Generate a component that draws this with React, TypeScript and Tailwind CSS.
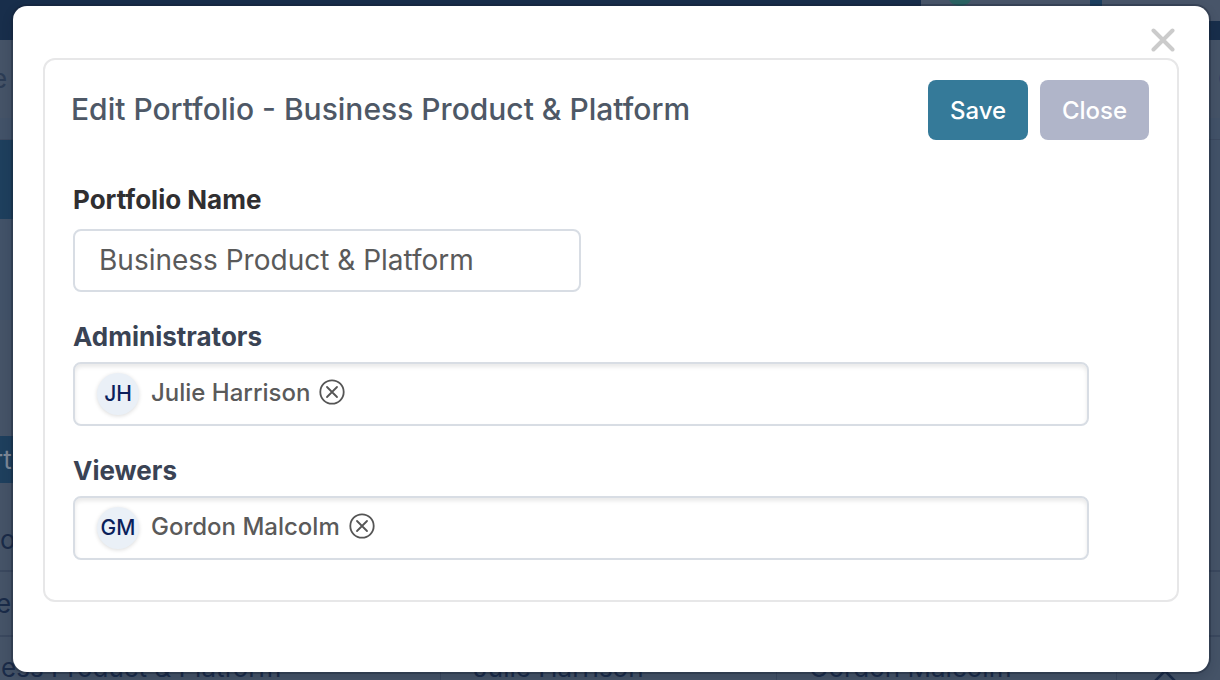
import { useState } from 'react';
import { ChevronUp } from 'lucide-react';

type Person = { initials: string; name: string };

function CloseIcon() {
  return (
    <svg viewBox="0 0 24 24" className="size-6" fill="none" stroke="#cbcbcb" strokeWidth="4" strokeLinecap="round">
      <path d="M2.5 2.5l19 19M21.5 2.5l-19 19" />
    </svg>
  );
}

function RemoveIcon() {
  return (
    <svg viewBox="0 0 26 26" className="size-[26px]" fill="none" stroke="#555" strokeWidth="1.8" strokeLinecap="round">
      <circle cx="13" cy="13" r="11.7" />
      <path d="M8 8l10 10M18 8L8 18" />
    </svg>
  );
}

function PeopleField({ label, initial }: { label: string; initial: Person[] }) {
  const [people, setPeople] = useState(initial);

  return (
    <div role="group" aria-label={label} className="mt-[29px] mr-[60px]">
      <h3 className="text-[26px] leading-8 font-bold text-[#3a4354]">{label}</h3>
      <div className="mt-[9px] flex h-16 items-center gap-4 rounded-lg border-2 border-[#d8dde4] px-[22px] pb-1 shadow-[inset_0_3px_4px_rgba(0,0,0,0.09)]">
        {people.map((person) => (
          <div key={person.name} className="flex items-center">
            <span className="mt-[3px] flex size-[42px] items-center justify-center rounded-full bg-[#eaf0f7] text-[21px] font-medium text-[#0b1f5c] shadow-[0_1px_4px_rgba(0,0,0,0.14)]">
              {person.initials}
            </span>
            <span className="ml-3 pt-0.5 text-2xl font-medium text-[#5a5a5a]">{person.name}</span>
            <button
              type="button"
              aria-label={`Remove ${person.name}`}
              className="ml-[9px]"
              onClick={() => setPeople(people.filter((p) => p !== person))}
            >
              <RemoveIcon />
            </button>
          </div>
        ))}
      </div>
    </div>
  );
}

function PageBehind() {
  return (
    <div aria-hidden="true" className="flex h-full flex-col bg-[#455367] text-[26px] leading-8 text-[#1a2b48]">
      <div className="flex h-10 shrink-0 bg-[#182e4b]">
        <div className="flex-1" />
        <div className="w-[299px]">
          <div className="flex h-[21px] overflow-hidden bg-[#1c3f60]">
            <div className="w-[169px] bg-[#485569] pl-[26px]">
              <div className="-mt-5 size-[26px] rounded-full bg-[#2b6263]" />
            </div>
            <div className="ml-3 flex-1 bg-[#485569]" />
          </div>
        </div>
      </div>
      <div className="flex h-[78px] shrink-0 items-center justify-between text-[#2c3c54]">
        <span className="-ml-2">e</span>
        <span className="-mr-[18px] text-[#1c3964]">O</span>
      </div>
      <div className="h-[22px] shrink-0 border-b border-[#3c4a60] bg-[#425268]" />
      <div className="flex h-[79px] shrink-0 bg-[#425268]">
        <div className="w-1/2 bg-[#1e3f5d]" />
      </div>
      <div className="h-[101px] shrink-0 bg-[#425268]" />
      <div className="h-[116px] shrink-0" />
      <div className="flex h-[47px] shrink-0">
        <div className="flex w-1/2 items-center bg-[#1e3f5d] text-[#7c8796]">
          <span className="-ml-[7px]">rt</span>
        </div>
      </div>
      <div className="flex h-[89px] shrink-0 items-end border-b-2 border-[#3a485e] pb-[14px]">o</div>
      <div className="flex h-[65px] shrink-0 items-center border-b-2 border-[#3a485e]">
        <span className="-ml-1">er</span>
      </div>
      <div className="flex h-[62px] shrink-0 items-center">
        <div className="flex h-full w-[441px] items-center border-r border-[#3a485e] pl-px">ess Product & Platform</div>
        <div className="flex h-full w-[336px] items-center border-r border-[#3a485e] pl-8">Julie Harrison</div>
        <div className="flex h-full w-[340px] items-center border-r border-[#3a485e] pl-8">Gordon Malcolm</div>
        <ChevronUp className="mt-4 ml-[28px] size-10" strokeWidth={1.5} />
      </div>
    </div>
  );
}

export default function App() {
  const [name, setName] = useState('Business Product & Platform');

  return (
    <div className="relative h-screen overflow-hidden font-['Inter',sans-serif]">
      <PageBehind />
      <div className="absolute inset-0 pt-[6px] pr-[11px] pb-2 pl-[13px]">
        <div
          role="dialog"
          aria-modal="true"
          aria-labelledby="dialog-title"
          className="flex h-full flex-col rounded-[14px] bg-white px-[30px] shadow-[0_0_0_2px_rgba(20,30,45,0.3),0_4px_12px_rgba(10,20,40,0.2)]"
        >
          <div className="flex h-[52px] shrink-0 items-end justify-end pr-1 pb-[6px]">
            <button type="button" aria-label="Close dialog">
              <CloseIcon />
            </button>
          </div>

          <form
            className="rounded-xl border-2 border-[#e7e7e8] px-7 pt-5 pb-10"
            onSubmit={(event) => event.preventDefault()}
          >
            <div className="-ml-0.5 flex items-center justify-between">
              <h2 id="dialog-title" className="pb-0.5 text-[30px] leading-9 font-medium text-[#4e5866]">
                Edit Portfolio - Business Product & Platform
              </h2>
              <div className="flex gap-3 text-2xl font-medium text-white">
                <button type="submit" className="h-[60px] w-[100px] rounded-lg bg-[#357a99] pt-0.5">
                  Save
                </button>
                <button type="button" className="h-[60px] w-[109px] rounded-lg bg-[#b0b5c9] pt-0.5">
                  Close
                </button>
              </div>
            </div>

            <div className="mt-11">
              <label htmlFor="portfolio-name" className="block text-[26px] leading-8 font-bold text-[#302f31]">
                Portfolio Name
              </label>
              <input
                id="portfolio-name"
                value={name}
                onChange={(event) => setName(event.target.value)}
                className="mt-[13px] block h-[63px] w-[508px] rounded-lg border-2 border-[#d8dde4] px-6 pb-0.5 text-[28px] text-[#5a5a5a] outline-none"
              />
            </div>

            <PeopleField label="Administrators" initial={[{ initials: 'JH', name: 'Julie Harrison' }]} />
            <PeopleField label="Viewers" initial={[{ initials: 'GM', name: 'Gordon Malcolm' }]} />
          </form>
        </div>
      </div>
    </div>
  );
}
